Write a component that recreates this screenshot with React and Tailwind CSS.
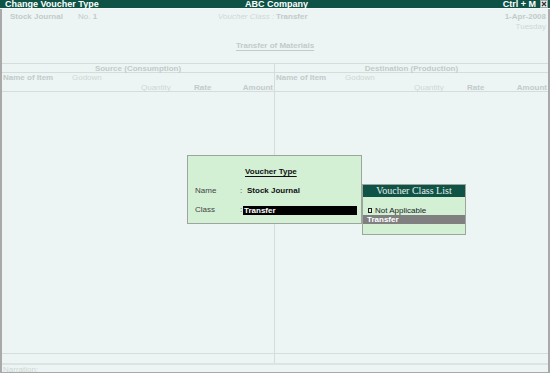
import React from "react";

const faint = "text-[#c3cac9]";

function Column({ title, offset }) {
  return (
    <div className={`flex flex-col ${offset ? "flex-1" : "w-[273px] border-r border-[#d5dddc]"}`}>
      <div className={`h-[9px] leading-[9px] text-center font-bold ${faint} border-b border-[#d5dddc]`}>
        {title}
      </div>
      <div className="h-[19px] border-b border-[#d5dddc]">
        <div className="flex h-[10px] leading-[10px]">
          <span className={`w-[70px] pl-[1px] font-bold ${faint}`}>Name of Item</span>
          <span className="text-[#d0d6d5]">Godown</span>
        </div>
        <div className="flex h-[9px] leading-[9px] text-[#d0d6d5]">
          <span className="w-[139px]" />
          <span className="w-[53px]">Quantity</span>
          <span className={`w-[48px] font-bold ${faint}`}>Rate</span>
          <span className={`flex-1 text-right pr-[1px] font-bold ${faint}`}>Amount</span>
        </div>
      </div>
      <div className="flex-1" />
      <div className="h-[10px] border-t border-[#d5dddc]" />
    </div>
  );
}

export default function App() {
  return (
    <div
      className="relative w-[550px] h-[373px] flex flex-col bg-[#ecf5f4] text-[8px] overflow-hidden"
      style={{ fontFamily: '"Liberation Sans", Arial, sans-serif' }}
    >
      {/* title bar */}
      <div className="h-[9px] bg-[#0f5347] border-b border-[#f4f8f7] flex items-center text-white font-bold text-[9px] leading-[8px] px-[5px]">
        <span className="w-[240px]">Change Voucher Type</span>
        <span className="flex-1">ABC Company</span>
        <span className="mr-[4px]">Ctrl + M</span>
        <svg width="8" height="8" viewBox="0 0 8 8" className="mr-[-3px]">
          <rect x="0.5" y="0.5" width="7" height="7" fill="#e8ecec" stroke="#9aa" />
          <path d="M2 2 L6 6 M6 2 L2 6" stroke="#333" strokeWidth="1.2" />
        </svg>
      </div>

      <div className="flex-1 flex flex-col border-x-2 border-b border-[#a9a9a9]">
        {/* voucher header */}
        <div className="h-[55px] border-b border-[#d5dddc] pt-[3px] flex flex-col">
          <div className="flex h-[10px] leading-[10px] pl-[8px] pr-[2px]">
            <span className={`w-[68px] font-bold ${faint}`}>Stock Journal</span>
            <span className={`w-[140px] ${faint}`}>No. <b>1</b></span>
            <span className="w-[58px] italic text-[#d0d6d5]">Voucher Class :</span>
            <span className={`font-bold ${faint}`}>Transfer</span>
            <span className={`flex-1 text-right font-bold ${faint}`}>1-Apr-2008</span>
          </div>
          <div className="h-[10px] leading-[10px] text-right pr-[2px] text-[#d0d6d5]">Tuesday</div>
          <div className="mt-[9px] h-[10px] leading-[10px] text-center">
            <span className={`font-bold underline underline-offset-2 ${faint}`}>Transfer of Materials</span>
          </div>
        </div>

        {/* source / destination */}
        <div className="flex-1 flex">
          <Column title="Source (Consumption)" />
          <Column title="Destination (Production)" offset />
        </div>

        <div className="h-[9px] leading-[9px] border-t-2 border-[#dde3e2] text-[#d0d6d5] pl-[1px]">Narration:</div>
      </div>

      {/* voucher type popup */}
      <div className="absolute left-[187px] top-[155px] w-[175px] h-[69px] bg-[#d3f0d5] border border-[#9ea59f] text-[#222]">
        <div className="mt-[11px] h-[10px] leading-[10px] pl-[57px] font-bold underline underline-offset-2 text-[#111]">
          Voucher Type
        </div>
        <div className="mt-[9px] flex h-[10px] leading-[10px]">
          <span className="w-[52px] pl-[7px] text-[#444]">Name</span>
          <span className="w-[7px] text-[#444]">:</span>
          <span className="font-bold text-[#111]">Stock Journal</span>
        </div>
        <div className="mt-[9px] flex h-[10px] leading-[10px] items-center">
          <span className="w-[52px] pl-[7px] text-[#444]">Class</span>
          <span className="w-[3px] text-[#444]">:</span>
          <span className="w-[114px] h-[9px] leading-[9px] bg-black text-white font-bold pl-[1px]">Transfer</span>
        </div>
      </div>

      {/* voucher class list */}
      <div className="absolute left-[362px] top-[184px] w-[104px] h-[51px] bg-[#d3f0d5] border border-[#9ea59f] flex flex-col">
        <div
          className="h-[12px] leading-[12px] bg-[#0f5347] text-[#e6efec] text-center text-[10px]"
          style={{ fontFamily: '"Liberation Serif", "Times New Roman", serif' }}
        >
          Voucher Class List
        </div>
        <div className="mt-[9px] h-[9px] leading-[9px] flex items-center pl-[5px] text-[#222]">
          <span className="w-[4px] h-[5px] border border-[#222] mr-[3px]" />
          Not Applicable
        </div>
        <div className="h-[9px] leading-[9px] bg-[#808080] text-white font-bold pl-[4px]">Transfer</div>
      </div>
    </div>
  );
}
